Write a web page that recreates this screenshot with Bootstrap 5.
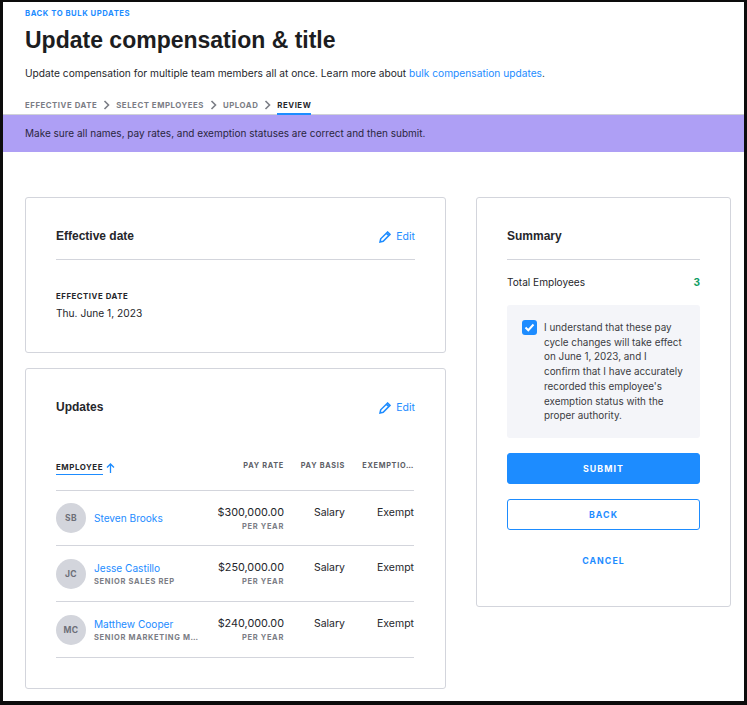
<!DOCTYPE html>
<html lang="en">
<head>
    <meta charset="UTF-8">
    <meta name="viewport" content="width=device-width, initial-scale=1.0">
    <title>Update compensation &amp; title</title>
    <link href="https://cdn.jsdelivr.net/npm/bootstrap@5.3.0/dist/css/bootstrap.min.css" rel="stylesheet">
    <style>
        html, body { height: 705px; overflow: hidden; }
        body { font-family: "Inter", "Liberation Sans", sans-serif; font-size: 10.2px; color: #25262b; background: #000; }
        a { color: #1d8cff; text-decoration: none; }
        .frame { height: 705px; background: #fff; border-style: solid; border-color: #0c0c0c; border-width: 2px 3px 4px 3px; overflow: hidden; }
        .page-head { padding: 7px 22px 0; height: 113px; border-bottom: 1px solid #cfd1d6; }
        .caps { font-weight: 700; text-transform: uppercase; letter-spacing: .07em; }
        .back-link { font-size: 7.7px; line-height: 10px; display: block; }
        .page-title { font-family: "Liberation Sans", sans-serif; font-size: 23px; line-height: 30px; font-weight: 700; margin: 6px 0 11px; color: #1c1d21; }
        .page-intro { font-size: 10.2px; line-height: 14px; margin: 0 0 20px; }
        .steps { font-size: 7.8px; line-height: 10px; color: #7b7d85; gap: 6px; }
        .steps .current { color: #25262b; position: relative; }
        .steps .current::after { content: ""; position: absolute; left: 0; right: 0; top: 13px; height: 2px; background: #1d8cff; }
        .notice { background: #ae9ff5; height: 37px; padding: 0 22px; font-size: 10px; display: flex; align-items: center; color: #2a2640; }
        .content { padding: 45px 0 0 22px; gap: 30px; align-items: flex-start; }
        .col-main { width: 421px; gap: 15px; flex: none; }
        .col-side { width: 255px; flex: none; }
        .panel { border: 1px solid #d3d5dc; border-radius: 3px; padding: 30px; background: #fff; }
        .panel-head { display: flex; justify-content: space-between; align-items: center; height: 16px; }
        .panel-title { font-family: "Liberation Sans", sans-serif; font-size: 12px; font-weight: 700; margin: 0; color: #25262b; }
        .edit-link { font-size: 10.5px; display: flex; align-items: center; gap: 5px; padding-top: 1px; }
        .rule { height: 1px; background: #d3d5dc; margin-top: 15px; }
        .field-label { font-size: 7.8px; line-height: 10px; color: #25262b; margin-top: 31px; }
        .field-value { font-size: 10.2px; line-height: 14px; margin-top: 5px; margin-bottom: 2px; }
        .emp-table { width: 358px; margin-top: 46px; table-layout: fixed; border-collapse: collapse; }
        .emp-table th { font-size: 7.3px; line-height: 10px; color: #5c5e66; text-align: right; padding: 0 0 19px; vertical-align: top; border-bottom: 1px solid #d3d5dc; white-space: nowrap; }
        .emp-table th:first-child { padding-top: 1px; padding-bottom: 15px; }
        .emp-table th svg { margin-left: 1px; }
        .emp-table td { font-size: 10.5px; line-height: 14px; padding: 15px 0 0; vertical-align: top; text-align: right; border-bottom: 1px solid #d3d5dc; }
        .emp-table td:first-child { padding: 12px 0; }
        .emp-table tr + tr td:first-child { padding-top: 13px; }
        .emp-table th:first-child, .emp-table td:first-child { text-align: left; }
        .sort-head { color: #25262b; border-bottom: 1px solid #1d8cff; padding-bottom: 2px; display: inline-block; font-size: 7.9px; }
        .avatar { width: 30px; height: 30px; border-radius: 50%; background: #d3d5dc; color: #6d6f78; font-size: 8.5px; font-weight: 700; letter-spacing: .05em; flex: none; }
        .emp-name { font-size: 10.1px; line-height: 14px; }
        .emp-role, .rate-unit { font-size: 7.5px; line-height: 10px; color: #7b7d85; letter-spacing: .09em; }
        .emp-role { white-space: nowrap; margin-top: 2px; }
        .rate-amount { font-size: 10.8px; }
        .rate-unit { margin-top: 2px; }
        .total-row { font-size: 10.1px; margin: 14px 0 15px; line-height: 16px; }
        .total-num { color: #0f9d63; font-weight: 700; }
        .confirm-box { background: #f4f5f9; border-radius: 3px; padding: 15px; gap: 7px; height: 133px; }
        .check-box { width: 15px; height: 15px; border-radius: 3px; background: #1d8cff; flex: none; }
        .confirm-text { font-size: 9.9px; line-height: 14.7px; color: #3b3c42; }
        .action-btn { display: block; width: 100%; height: 31px; border-radius: 3px; font-size: 8.8px; font-weight: 700; letter-spacing: .12em; padding: 0; line-height: 29px; margin-top: 15px; }
        .action-solid { background: #1d8cff; border: 1px solid #1d8cff; color: #fff; }
        .action-line { background: #fff; border: 1px solid #1d8cff; color: #1d8cff; }
        .action-plain { background: none; border: 0; color: #1d8cff; }
    </style>
</head>
<body>
<div class="frame">
    <div class="page-head">
        <a href="#" class="back-link caps">Back to bulk updates</a>
        <h1 class="page-title">Update compensation &amp; title</h1>
        <p class="page-intro">Update compensation for multiple team members all at once. Learn more about <a href="#">bulk compensation updates</a>.</p>
        <div class="steps caps d-flex align-items-center">
            <span>Effective date</span>
            <svg width="7" height="10" viewBox="0 0 7 10"><path d="M1.500 1l4 4-4 4" fill="none" stroke="#7b7d85" stroke-width="1.600"/></svg>
            <span>Select employees</span>
            <svg width="7" height="10" viewBox="0 0 7 10"><path d="M1.500 1l4 4-4 4" fill="none" stroke="#7b7d85" stroke-width="1.600"/></svg>
            <span>Upload</span>
            <svg width="7" height="10" viewBox="0 0 7 10"><path d="M1.500 1l4 4-4 4" fill="none" stroke="#7b7d85" stroke-width="1.600"/></svg>
            <span class="current">Review</span>
        </div>
    </div>
    <div class="notice">Make sure all names, pay rates, and exemption statuses are correct and then submit.</div>

    <div class="content d-flex">
        <div class="col-main d-flex flex-column">
            <div class="panel">
                <div class="panel-head">
                    <h2 class="panel-title">Effective date</h2>
                    <a href="#" class="edit-link">
                        <svg width="12" height="12" viewBox="0 0 12 12"><path d="M1 11l.7-3.200L8.600 1l2.400 2.400-6.800 6.900z M7.400 2.300l2.300 2.300" fill="none" stroke="#1d8cff" stroke-width="1.500"/></svg>
                        Edit
                    </a>
                </div>
                <div class="rule"></div>
                <div class="field-label caps">Effective date</div>
                <div class="field-value">Thu. June 1, 2023</div>
            </div>
            <div class="panel">
                <div class="panel-head">
                    <h2 class="panel-title">Updates</h2>
                    <a href="#" class="edit-link">
                        <svg width="12" height="12" viewBox="0 0 12 12"><path d="M1 11l.7-3.200L8.600 1l2.400 2.400-6.800 6.900z M7.400 2.300l2.300 2.300" fill="none" stroke="#1d8cff" stroke-width="1.500"/></svg>
                        Edit
                    </a>
                </div>
                <table class="emp-table">
                    <colgroup><col style="width:148px"><col style="width:80px"><col style="width:61px"><col style="width:69px"></colgroup>
                    <thead>
                        <tr class="caps">
                            <th><span class="sort-head caps">Employee</span>
                                <svg width="9" height="10" viewBox="0 0 9 10"><path d="M4.500 10V1.500M1 4.500l3.500-3.500L8 4.500" fill="none" stroke="#1d8cff" stroke-width="1.300"/></svg></th>
                            <th>Pay rate</th>
                            <th>Pay basis</th>
                            <th>Exemptio…</th>
                        </tr>
                    </thead>
                    <tbody>
                        <tr>
                            <td><div class="d-flex align-items-center gap-2"><div class="avatar d-flex align-items-center justify-content-center">SB</div><div><a href="#" class="emp-name d-block">Steven Brooks</a></div></div></td>
                            <td><span class="rate-amount">$300,000.00</span><div class="rate-unit caps">Per year</div></td>
                            <td>Salary</td>
                            <td>Exempt</td>
                        </tr>
                        <tr>
                            <td><div class="d-flex align-items-center gap-2"><div class="avatar d-flex align-items-center justify-content-center">JC</div><div><a href="#" class="emp-name d-block">Jesse Castillo</a><div class="emp-role caps">Senior sales rep</div></div></div></td>
                            <td><span class="rate-amount">$250,000.00</span><div class="rate-unit caps">Per year</div></td>
                            <td>Salary</td>
                            <td>Exempt</td>
                        </tr>
                        <tr>
                            <td><div class="d-flex align-items-center gap-2"><div class="avatar d-flex align-items-center justify-content-center">MC</div><div><a href="#" class="emp-name d-block">Matthew Cooper</a><div class="emp-role caps">Senior marketing m…</div></div></div></td>
                            <td><span class="rate-amount">$240,000.00</span><div class="rate-unit caps">Per year</div></td>
                            <td>Salary</td>
                            <td>Exempt</td>
                        </tr>
                    </tbody>
                </table>
            </div>
        </div>

        <div class="col-side panel">
            <div class="panel-head"><h2 class="panel-title">Summary</h2></div>
            <div class="rule"></div>
            <div class="total-row d-flex justify-content-between"><span>Total Employees</span><span class="total-num">3</span></div>
            <div class="confirm-box d-flex">
                <div class="check-box d-flex align-items-center justify-content-center">
                    <svg width="11" height="9" viewBox="0 0 11 9"><path d="M1.500 4.500l2.800 2.700L9.500 1.500" fill="none" stroke="#fff" stroke-width="2"/></svg>
                </div>
                <div class="confirm-text">I understand that these pay cycle changes will take effect on June 1, 2023, and I confirm that I have accurately recorded this employee's exemption status with the proper authority.</div>
            </div>
            <button type="button" class="action-btn action-solid text-uppercase">Submit</button>
            <button type="button" class="action-btn action-line text-uppercase">Back</button>
            <button type="button" class="action-btn action-plain text-uppercase">Cancel</button>
        </div>
    </div>
</div>
<script src="https://cdn.jsdelivr.net/npm/bootstrap@5.3.0/dist/js/bootstrap.bundle.min.js"></script>
</body>
</html>
